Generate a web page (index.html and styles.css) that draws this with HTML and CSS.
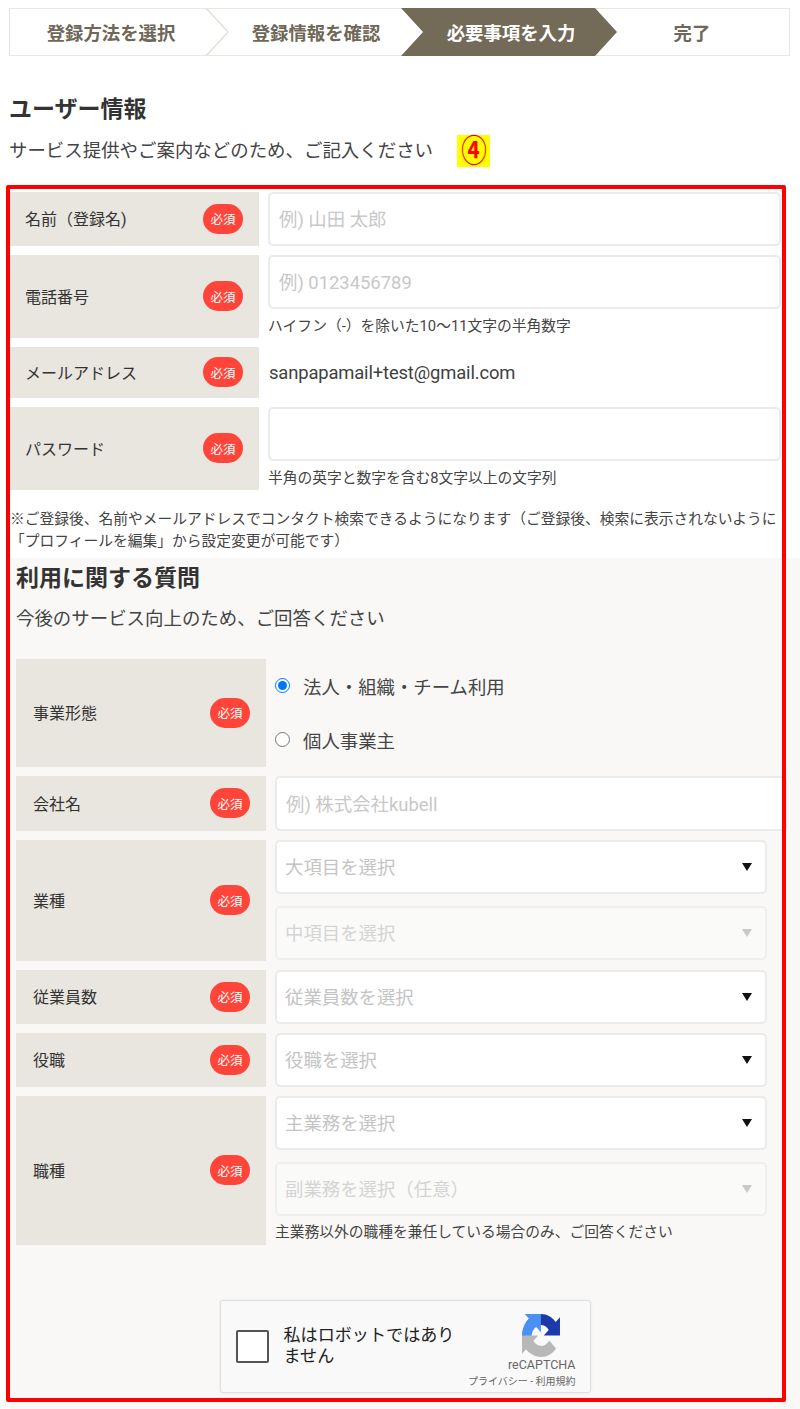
FILE: index.html
```html
<!DOCTYPE html>
<html lang="ja">
<head>
<meta charset="utf-8">
<title>ユーザー情報</title>
<link rel="stylesheet" href="styles.css">
</head>
<body>
<div class="page">
  <nav class="stepper">
    <div class="step step-first">登録方法を選択
      <svg class="chevron" viewBox="0 0 24 48" preserveAspectRatio="none"><path d="M1 0 L23 24 L1 48" fill="none" stroke="#e2dfd6" stroke-width="1.4"/></svg>
    </div>
    <div class="step step-second">登録情報を確認</div>
    <div class="step step-active">必要事項を入力</div>
    <div class="step step-last">完了</div>
  </nav>

  <header class="intro">
    <h1 class="title">ユーザー情報</h1>
    <p class="lead">サービス提供やご案内などのため、ご記入ください<span class="marker"><span class="marker-glyph">④</span></span></p>
  </header>

  <form class="form-user">
    <div class="row">
      <div class="label"><span>名前（登録名)</span><em class="badge">必須</em></div>
      <div class="stack"><input class="field" type="text" placeholder="例) 山田 太郎"></div>
    </div>
    <div class="row">
      <div class="label"><span>電話番号</span><em class="badge">必須</em></div>
      <div class="stack">
        <input class="field" type="text" placeholder="例) 0123456789">
        <p class="hint">ハイフン（-）を除いた10〜11文字の半角数字</p>
      </div>
    </div>
    <div class="row row-mail">
      <div class="label"><span>メールアドレス</span><em class="badge">必須</em></div>
      <div class="stack stack-center"><span class="value">sanpapamail+test@gmail.com</span></div>
    </div>
    <div class="row">
      <div class="label"><span>パスワード</span><em class="badge">必須</em></div>
      <div class="stack">
        <input class="field" type="password">
        <p class="hint">半角の英字と数字を含む8文字以上の文字列</p>
      </div>
    </div>
    <p class="note">※ご登録後、名前やメールアドレスでコンタクト検索できるようになります（ご登録後、検索に表示されないように「プロフィールを編集」から設定変更が可能です）</p>
  </form>

  <section class="survey">
    <h2 class="title">利用に関する質問</h2>
    <p class="lead">今後のサービス向上のため、ご回答ください</p>

    <div class="survey-rows">
      <div class="row row-wide">
        <div class="label"><span>事業形態</span><em class="badge">必須</em></div>
        <div class="stack stack-radios">
          <label class="radio"><input type="radio" name="kind" checked>法人・組織・チーム利用</label>
          <label class="radio"><input type="radio" name="kind">個人事業主</label>
        </div>
      </div>
      <div class="row row-wide">
        <div class="label"><span>会社名</span><em class="badge">必須</em></div>
        <div class="stack"><input class="field field-company" type="text" placeholder="例) 株式会社kubell"></div>
      </div>
      <div class="row row-wide">
        <div class="label"><span>業種</span><em class="badge">必須</em></div>
        <div class="stack stack-selects">
          <div class="select">大項目を選択</div>
          <div class="select select-off">中項目を選択</div>
        </div>
      </div>
      <div class="row row-wide">
        <div class="label"><span>従業員数</span><em class="badge">必須</em></div>
        <div class="stack"><div class="select">従業員数を選択</div></div>
      </div>
      <div class="row row-wide">
        <div class="label"><span>役職</span><em class="badge">必須</em></div>
        <div class="stack"><div class="select">役職を選択</div></div>
      </div>
      <div class="row row-wide">
        <div class="label"><span>職種</span><em class="badge">必須</em></div>
        <div class="stack stack-selects">
          <div class="select">主業務を選択</div>
          <div class="select select-off">副業務を選択（任意）</div>
          <p class="hint hint-tight">主業務以外の職種を兼任している場合のみ、ご回答ください</p>
        </div>
      </div>
    </div>

    <div class="captcha-wrap">
      <div class="captcha">
        <span class="captcha-box"></span>
        <span class="captcha-text">私はロボットではありません</span>
        <div class="captcha-brand">
          <svg class="captcha-logo" viewBox="0 0 64 64" preserveAspectRatio="none">
            <path d="M64 31.955l-.033-1.37V4.687l-7.16 7.16C50.948 4.674 42.033.093 32.05.093c-10.4 0-19.622 4.96-25.458 12.64l11.736 11.86a15.55 15.55 0 0 1 4.754-5.334c2.05-1.6 4.952-2.906 8.968-2.906.485 0 .86.057 1.135.163 4.976.393 9.288 3.14 11.828 7.124l-8.307 8.307 26.295.009" fill="#1c3aa9"/>
            <path d="M31.9 0l-1.37.033H4.632l7.16 7.16C4.619 13.052.038 21.967.038 31.95c0 10.4 4.96 19.622 12.64 25.458l11.86-11.736a15.55 15.55 0 0 1-5.334-4.754c-1.6-2.05-2.906-4.952-2.906-8.968 0-.485.057-.86.163-1.135.393-4.976 3.14-9.288 7.124-11.828l8.307 8.307L31.9 0" fill="#4a90f5"/>
            <path d="M.001 31.955l.033 1.37v25.9l7.16-7.16c5.86 7.173 14.774 11.754 24.757 11.754 10.4 0 19.622-4.96 25.458-12.64l-11.736-11.86a15.55 15.55 0 0 1-4.754 5.334c-2.05 1.6-4.952 2.906-8.968 2.906-.485 0-.86-.057-1.135-.163-4.976-.393-9.288-3.14-11.828-7.124l8.307-8.307-26.295-.009" fill="#b8b8b8"/>
          </svg>
          <span class="captcha-name">reCAPTCHA</span>
          <span class="captcha-links">プライバシー - 利用規約</span>
        </div>
      </div>
    </div>
  </section>

  <div class="annotation"></div>
</div>
</body>
</html>
```
FILE: styles.css
```css
* { box-sizing: border-box; }
html, body { margin: 0; padding: 0; }
body {
  background: #fff;
  color: #333;
  font-family: Roboto, "Noto Sans CJK JP", sans-serif;
  font-size: 18.4px;
}
.page { position: relative; width: 800px; height: 1409px; overflow: hidden; }

/* stepper */
.stepper {
  display: flex;
  margin: 8px 10px 0 9px;
  height: 48px;
  border: 1px solid #e8e6df;
  font-size: 18.4px;
  font-weight: 700;
  color: #6f6757;
}
.step { display: flex; align-items: center; justify-content: center; position: relative; }
.step-first { width: 195px; padding-left: 7px; }
.step-second { width: 196px; padding-left: 26px; }
.step-active {
  width: 216px;
  margin: -1px 0;
  padding-left: 4px;
  background: #736a58;
  color: #fff;
  clip-path: polygon(0 0, 194px 0, 100% 50%, 194px 100%, 0 100%, 22px 50%);
}
.step-last { flex: 1; padding-right: 22px; }
.chevron { position: absolute; left: 100%; top: -1px; width: 24px; height: 48px; }

/* headings */
.intro { margin: 38px 0 25px 9px; }
.title { margin: 0; height: 32px; line-height: 32px; font-size: 23px; font-weight: 700; color: #333; }
.lead { margin: 9px 0 0; height: 32px; line-height: 32px; font-size: 18.45px; color: #444; }
.marker {
  display: inline-flex;
  align-items: center;
  justify-content: center;
  width: 33px;
  height: 32px;
  margin-left: 24px;
  background: #ff0;
  vertical-align: top;
}
.marker-glyph {
  display: block;
  color: #f00;
  font-size: 32px;
  font-weight: 700;
  line-height: 32px;
  transform: scaleX(.8);
}

/* rows */
.form-user { margin-left: 10px; }
.row { display: grid; grid-template-columns: 249px 513px; column-gap: 9px; margin-bottom: 9px; }
.row-mail { min-height: 51px; }
.row-wide { grid-template-columns: 250px 492px; }
.label {
  display: flex;
  align-items: center;
  justify-content: space-between;
  padding: 0 16px 0 15px;
  background: #e8e6df;
  font-size: 16px;
  color: #333;
}
.label span { margin-bottom: 2px; }
.row-wide .label { padding-left: 17px; }
.badge {
  display: flex;
  align-items: center;
  justify-content: center;
  flex: none;
  width: 40px;
  height: 30px;
  margin-bottom: 1px;
  border-radius: 15px;
  background: #ff443a;
  color: #fff;
  font-family: "Noto Sans CJK JP", sans-serif;
  font-style: normal;
  font-size: 12.5px;
}
.stack { display: flex; flex-direction: column; min-width: 0; }
.stack-center { justify-content: center; }
.field {
  display: block;
  width: 100%;
  height: 54px;
  padding: 1px 9px 0;
  border: 2px solid #ebebeb;
  border-radius: 5px;
  background: #fff;
  font: inherit;
  color: #333;
  outline: none;
}
.field::placeholder { color: #c8c8c8; opacity: 1; }
.field-company { width: 512px; height: 55px; }
.value { font-size: 18.4px; letter-spacing: -.15px; color: #3f3f3f; padding-left: 1px; margin-bottom: 1px; }
.hint { margin: 6px 0 1px; line-height: 22px; font-size: 14.75px; color: #444; }
.hint-tight { margin: -7px 0 1px; }
.note { margin: 18px 0 0; height: 50px; line-height: 22px; font-size: 14.75px; color: #444; }

/* survey block */
.survey { margin-left: 10px; padding: 5px 0 16px 6px; background: #f9f8f6; }
.survey .lead { margin-top: 8px; }
.survey-rows { margin-top: 24px; }
.stack-radios { justify-content: flex-start; }
.radio { display: flex; align-items: center; gap: 13px; height: 54px; padding-bottom: 1px; font-size: 18.4px; color: #444; }
.radio input { width: 15px; height: 15px; margin: 0; flex: none; }
.stack-selects { gap: 12px; padding-bottom: 1px; }
.select {
  position: relative;
  display: flex;
  align-items: center;
  height: 54px;
  padding: 0 8px 2px;
  border: 2px solid #ebebeb;
  border-radius: 5px;
  background: #fff;
  color: #c4c4c4;
}
.select::after {
  content: "";
  position: absolute;
  right: 13px;
  top: 50%;
  margin-top: -4px;
  border-left: 5px solid transparent;
  border-right: 5px solid transparent;
  border-top: 8px solid #111;
}
.select-off { background: #fafaf9; color: #d4d4d4; border-color: #f0efed; }
.select-off::after { border-top-color: #c8c8c8; }

/* captcha */
.captcha-wrap { display: flex; justify-content: center; margin: 55px 0 0 -6px; }
.captcha {
  display: flex;
  align-items: center;
  width: 371px;
  height: 93px;
  padding-left: 15px;
  background: #f9f9f9;
  border: 1px solid #e0e0e0;
  border-radius: 3px;
  box-shadow: 0 0 3px rgba(0,0,0,.08);
}
.captcha-box {
  flex: none;
  width: 33px;
  height: 33px;
  border: 2px solid #555;
  border-radius: 2px;
  background: #fff;
}
.captcha-text { width: 176px; margin: 0 0 2px 15px; font-size: 17.1px; line-height: 21px; color: #222; }
.captcha-brand {
  flex: 1;
  display: flex;
  flex-direction: column;
  align-items: flex-end;
  height: 100%;
  padding: 13px 14px 0 0;
}
.captcha-logo { width: 38px; height: 43px; margin-right: 16px; }
.captcha-name { font-size: 12.5px; line-height: 16px; color: #666; }
.captcha-links { font-size: 10px; line-height: 16px; color: #666; white-space: nowrap; margin-top: 1px; }

/* annotation frame drawn over the form */
.annotation {
  position: absolute;
  left: 6px;
  top: 185px;
  width: 780px;
  height: 1217px;
  border: 4px solid #f00;
  border-radius: 2px;
  pointer-events: none;
}
```
